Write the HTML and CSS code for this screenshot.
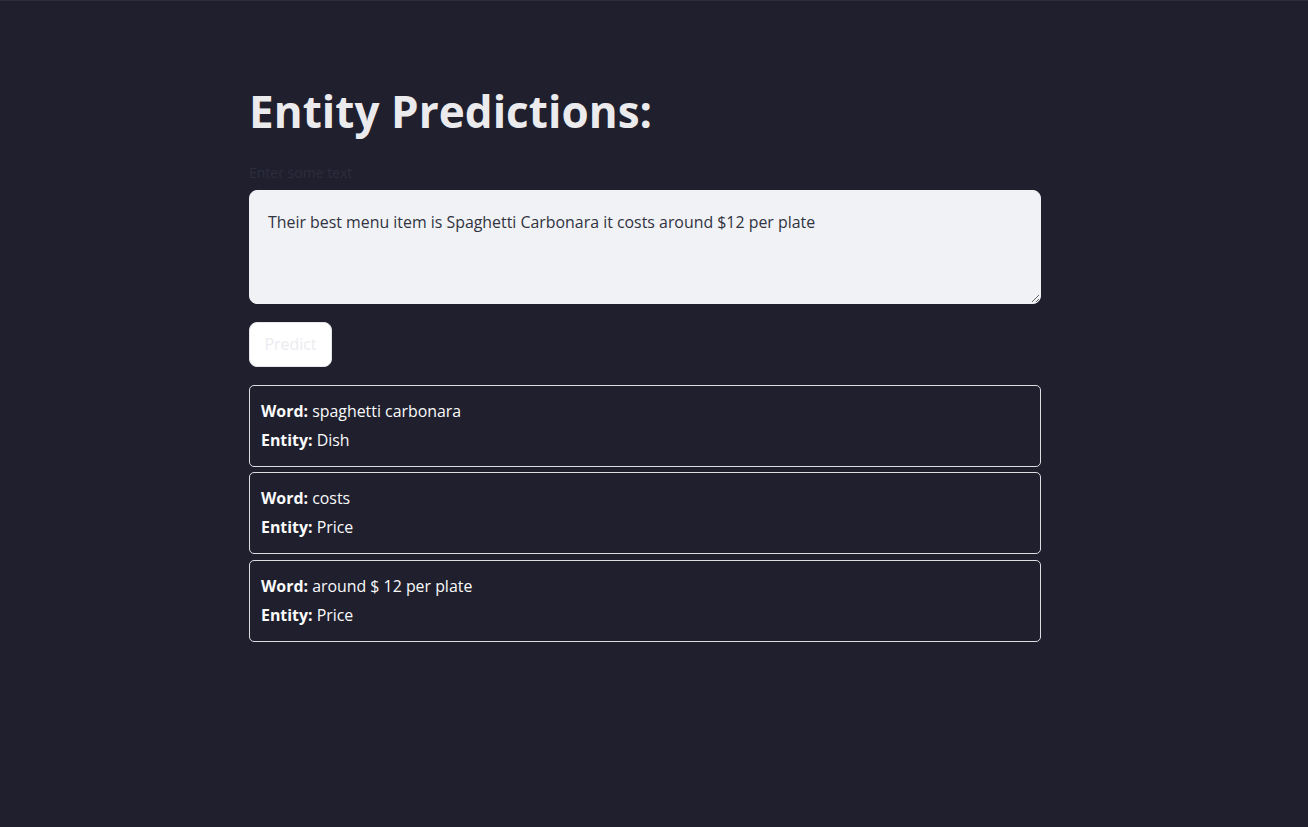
FILE: index.html
```html
<!DOCTYPE html>
<html lang="en">
<head>
<meta charset="utf-8">
<title>Entity Predictions</title>
<link rel="stylesheet" href="styles.css">
</head>
<body>
<main class="main">
  <h1 class="title">Entity Predictions:</h1>
  <label class="field-label" for="txt">Enter some text</label>
  <textarea id="txt" class="text-input">Their best menu item is Spaghetti Carbonara it costs around $12 per plate</textarea>
  <button class="btn" type="button">Predict</button>
  <section class="results">
    <div class="card">
      <p class="line"><strong>Word:</strong> spaghetti carbonara</p>
      <p class="line"><strong>Entity:</strong> Dish</p>
    </div>
    <div class="card">
      <p class="line"><strong>Word:</strong> costs</p>
      <p class="line"><strong>Entity:</strong> Price</p>
    </div>
    <div class="card">
      <p class="line"><strong>Word:</strong> around $ 12 per plate</p>
      <p class="line"><strong>Entity:</strong> Price</p>
    </div>
  </section>
</main>
</body>
</html>
```
FILE: styles.css
```css
html, body {
  margin: 0;
  padding: 0;
  height: 100%;
}
body {
  background: #1f1f2e;
  font-family: "Open Sans", "Noto Sans", sans-serif;
  color: #fafafa;
  box-sizing: border-box;
  border-top: 1px solid #2c2c3c;
}
.main {
  width: 792px;
  margin-left: 249px;
  padding-top: 84px;
  display: flex;
  flex-direction: column;
  align-items: flex-start;
}
.title {
  margin: 0;
  font-size: 44px;
  line-height: 52.8px;
  font-weight: 700;
  color: #ebebee;
  letter-spacing: 0.05px;
}
.field-label {
  margin-top: 25px;
  font-size: 14px;
  line-height: 20px;
  color: #2d2d3d;
  height: 23px;
}
.text-input {
  box-sizing: border-box;
  width: 792px;
  height: 114px;
  margin: 4px 0 0;
  padding: 20px 18px 10px;
  border: 1px solid #f0f2f6;
  border-radius: 8px;
  background: #f0f2f6;
  color: #31333f;
  font-family: inherit;
  font-size: 15.9px;
  line-height: 22px;
  resize: vertical;
  outline: none;
}
.btn {
  margin-top: 18px;
  box-sizing: border-box;
  width: 83px;
  height: 45px;
  padding: 0;
  background: #ffffff;
  border: 1px solid #e6e6ea;
  border-radius: 8px;
  color: #ebebef;
  font-family: inherit;
  font-size: 15.9px;
}
.results {
  margin-top: 18px;
  width: 100%;
  display: flex;
  flex-direction: column;
  gap: 5.5px;
}
.card {
  box-sizing: border-box;
  height: 82px;
  padding: 11px 12px 11px 11px;
  border: 1px solid #dcdce2;
  border-radius: 5px;
}
.line {
  margin: 0;
  font-size: 15.9px;
  line-height: 29px;
  color: #fafafa;
}
.line strong {
  font-weight: 700;
}
```
